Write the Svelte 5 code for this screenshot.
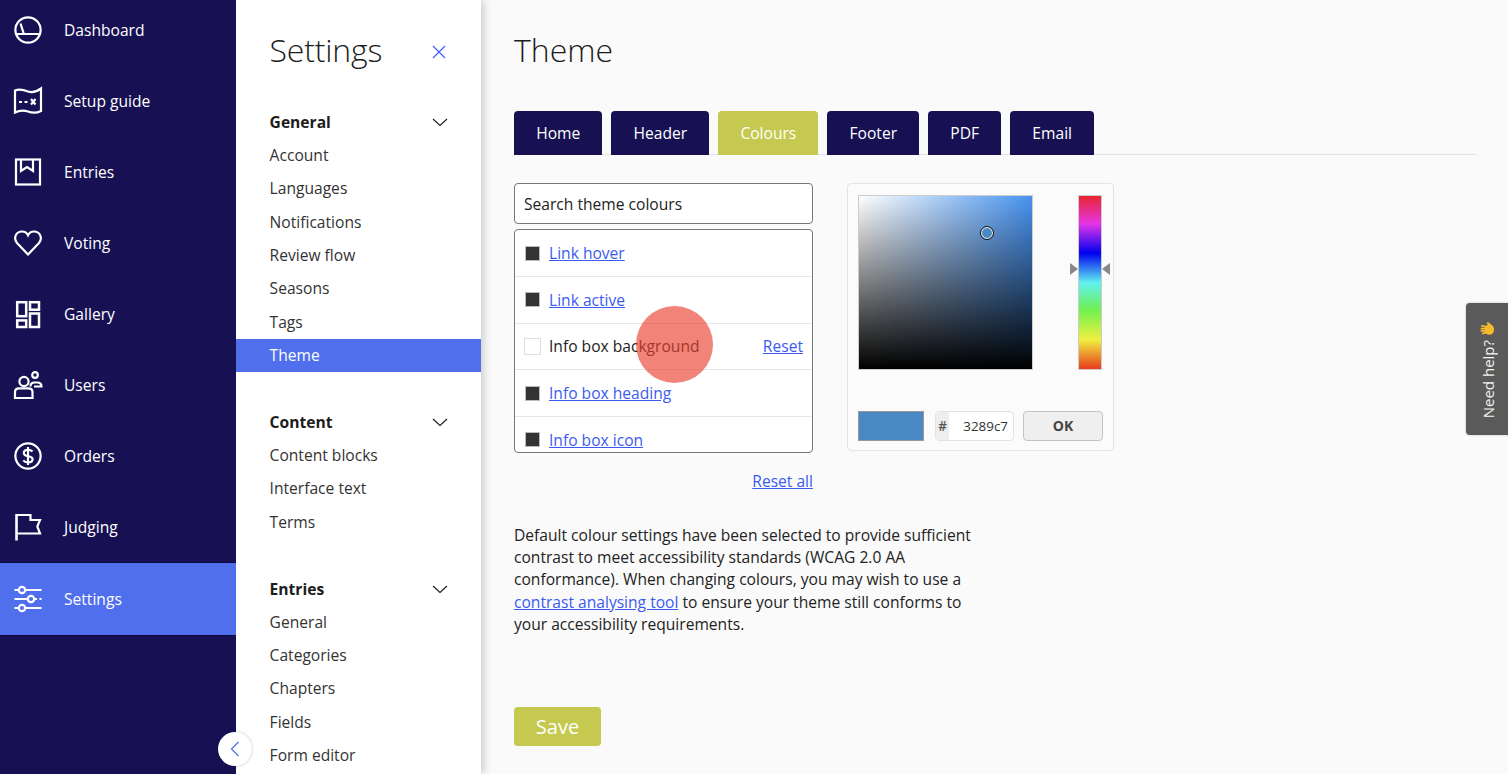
<script>
  const nav = [
    { label: 'Dashboard', icon: 'dash' },
    { label: 'Setup guide', icon: 'map' },
    { label: 'Entries', icon: 'entries' },
    { label: 'Voting', icon: 'heart' },
    { label: 'Gallery', icon: 'gallery' },
    { label: 'Users', icon: 'users' },
    { label: 'Orders', icon: 'orders' },
    { label: 'Judging', icon: 'flag' },
    { label: 'Settings', icon: 'sliders', active: true }
  ];
  const sections = [
    { title: 'General', items: ['Account', 'Languages', 'Notifications', 'Review flow', 'Seasons', 'Tags', 'Theme'] },
    { title: 'Content', items: ['Content blocks', 'Interface text', 'Terms'] },
    { title: 'Entries', items: ['General', 'Categories', 'Chapters', 'Fields', 'Form editor'] }
  ];
  const tabs = ['Home', 'Header', 'Colours', 'Footer', 'PDF', 'Email'];
  const colours = [
    { name: 'Link hover' },
    { name: 'Link active' },
    { name: 'Info box background', custom: true },
    { name: 'Info box heading' },
    { name: 'Info box icon' }
  ];
</script>

<div class="app">
  <nav class="rail">
    {#each nav as item}
      <div class="rail-item" class:on={item.active}>
        <svg class="rail-icon" viewBox="0 0 28 28" fill="none" stroke="#fff" stroke-width="2.2">
          {#if item.icon === 'dash'}
            <circle cx="14" cy="14" r="12.6" />
            <path d="M6.5 7.5 L9.8 17.8 M1.5 18 H26.5" />
          {:else if item.icon === 'map'}
            <path d="M1 3.5 C5 2 9 2.5 14 4.5 C19 6 23 4.5 27 1.5 V24 C23 26 19 26.5 14 24.5 C9 23 5 23.5 1 25.5 Z" />
            <path d="M5 15 H8 M10.5 15 H13.5 M17 12 L21.5 17.5 M21.5 12 L17 17.5" />
          {:else if item.icon === 'entries'}
            <rect x="2" y="1.5" width="24" height="25" />
            <path d="M7 1.5 V13 L13 9 L19 13 V1.5" />
          {:else if item.icon === 'heart'}
            <path d="M14 25.5 L3 14 C-1 9 2 2.5 8 2.5 C11 2.5 13 4.2 14 6.3 C15 4.2 17 2.5 20 2.5 C26 2.5 29 9 25 14 Z" />
          {:else if item.icon === 'gallery'}
            <rect x="3.2" y="2.2" width="9" height="14" stroke-width="2.5" />
            <rect x="16" y="2.2" width="9" height="7.5" stroke-width="2.5" />
            <rect x="3.2" y="20.4" width="9" height="6.6" stroke-width="2.5" />
            <rect x="16" y="13.5" width="9" height="13.5" stroke-width="2.5" />
          {:else if item.icon === 'users'}
            <circle cx="10" cy="10.5" r="4.6" />
            <path d="M1 27 V21 C1 18.5 3 17.3 5 17.3 H14.5 C16.8 17.3 18.5 18.8 18.5 21 V27 Z" />
            <circle cx="21" cy="4" r="2.8" />
            <path d="M16.5 15.5 C16.5 12.5 18.5 11.5 20.5 11.5 H23 C25.5 11.5 27.5 12.5 27.5 15.5 H20" />
          {:else if item.icon === 'orders'}
            <circle cx="14" cy="14" r="12.6" />
            <path d="M18.5 9.5 C17.5 8.3 16 7.8 14 7.8 C11.5 7.8 9.8 9.2 9.8 11 C9.8 15.8 18.6 12.8 18.6 17.2 C18.6 19.2 16.6 20.3 14 20.3 C12 20.3 10.2 19.6 9.3 18.3 M14 5 V23" />
          {:else if item.icon === 'flag'}
            <path d="M2.5 1 V27.5" stroke-width="2.6" />
            <path d="M2.5 2 H16.5 V7 H26 L23.3 13.5 L26 20.5 H2.5" />
          {:else if item.icon === 'sliders'}
            <path d="M0.5 5 H4.5 M11.5 5 H27.5 M0.5 14 H13.5 M20.5 14 H23 M25.5 14 H27.5 M0.5 23 H4.5 M11.5 23 H27.5" />
            <circle cx="8" cy="5" r="3.2" />
            <circle cx="17" cy="14" r="3.2" />
            <circle cx="8" cy="23" r="3.2" />
          {/if}
        </svg>
        <span>{item.label}</span>
      </div>
    {/each}
  </nav>

  <aside class="panel">
    <header class="panel-head">
      <h2>Settings</h2>
      <svg class="close" viewBox="0 0 14 14" fill="none" stroke="#3d5ef0" stroke-width="1.2">
        <path d="M1 1 L13 13 M13 1 L1 13" />
      </svg>
    </header>
    {#each sections as s}
      <section class="group">
        <div class="group-title">
          <b>{s.title}</b>
          <svg class="chev" viewBox="0 0 16 9" fill="none" stroke="#1a1a1a" stroke-width="1.1">
            <path d="M1 1 L8 7.5 L15 1" />
          </svg>
        </div>
        {#each s.items as it}
          <div class="link" class:on={it === 'Theme'}>{it}</div>
        {/each}
      </section>
    {/each}
  </aside>

  <main class="main">
    <h1>Theme</h1>
    <div class="tabs">
      {#each tabs as t}
        <div class="tab" class:sel={t === 'Colours'}>{t}</div>
      {/each}
    </div>

    <div class="editor">
      <div class="left">
        <div class="search">Search theme colours</div>
        <div class="list">
          {#each colours as c}
            <div class="row">
              <span class="sw" class:blank={c.custom}></span>
              {#if c.custom}
                <span class="plain">{c.name}</span>
                <a class="reset" href="#r">Reset</a>
              {:else}
                <a href="#c">{c.name}</a>
              {/if}
            </div>
          {/each}
        </div>
        <div class="reset-all"><a href="#a">Reset all</a></div>
      </div>

      <div class="picker">
        <div class="pick-top">
          <div class="sv"><span class="dot"></span></div>
          <div class="hue">
            <span class="arrow l"></span>
            <span class="arrow r"></span>
          </div>
        </div>
        <div class="pick-bottom">
          <div class="current"></div>
          <div class="hex"><span class="hash">#</span><span class="val">3289c7</span></div>
          <div class="ok">OK</div>
        </div>
      </div>
    </div>

    <p class="note">Default colour settings have been selected to provide sufficient contrast to meet accessibility standards (WCAG 2.0 AA conformance). When changing colours, you may wish to use a <a href="#t">contrast analysing tool</a> to ensure your theme still conforms to your accessibility requirements.</p>

    <div class="save">Save</div>
  </main>

  <button class="collapse" aria-label="Collapse">
    <svg viewBox="0 0 10 16" fill="none" stroke="#4f6fed" stroke-width="1.2"><path d="M8.5 1 L1.5 8 L8.5 15" /></svg>
  </button>
  <div class="touch"></div>
  <div class="help">
    <svg class="hand" viewBox="0 0 16 16">
      <g fill="#f5b92e">
        <ellipse cx="10" cy="8" rx="5" ry="5.6" />
        <rect x="1" y="3.6" width="7" height="2" rx="1" transform="rotate(12 4 4.6)" />
        <rect x="0.5" y="6" width="7" height="2" rx="1" />
        <rect x="0.5" y="8.4" width="7" height="2" rx="1" />
        <rect x="2" y="10.8" width="6" height="2" rx="1" transform="rotate(-12 5 11.8)" />
        <rect x="7" y="0.6" width="5" height="2.4" rx="1.2" transform="rotate(40 9 2)" />
      </g>
    </svg>
    <span>Need help?</span>
  </div>
</div>

<style>
  :global(body) { margin: 0; }
  .app {
    position: relative;
    display: flex;
    width: 1508px;
    height: 774px;
    overflow: hidden;
    font-family: "Open Sans", "Noto Sans", sans-serif;
    font-size: 15.6px;
    color: #1c1c1c;
    background: #fafafa;
  }
  a { color: #3b5bf0; text-decoration: underline; }

  .rail {
    flex: 0 0 236px;
    background: #171154;
    color: #fff;
    position: relative;
    z-index: 2;
  }
  .rail-item {
    display: flex;
    align-items: center;
    height: 71.1px;
    padding-left: 14px;
    gap: 22px;
    box-sizing: border-box;
    color: #fff;
  }
  .rail-item:first-child { margin-top: -5.8px; }
  .rail-item.on {
    background: #4f6fed;
    height: 71.8px;
    box-shadow: 0 -1px 0 #0f0b40, 0 1px 0 #0f0b40;
  }
  .rail-icon { width: 28px; height: 28px; flex: none; overflow: visible; }

  .panel {
    flex: 0 0 245px;
    background: #fff;
    box-shadow: 3px 0 8px rgba(0, 0, 0, 0.18);
    position: relative;
    z-index: 1;
  }
  .panel-head {
    display: flex;
    align-items: center;
    justify-content: space-between;
    height: 105.65px;
    padding: 0 35px 0 33.6px;
    box-sizing: border-box;
  }
  .panel-head h2 {
    margin: -6px 0 0;
    font-size: 32px;
    font-weight: 300;
    color: #1c1c1c;
    letter-spacing: -0.2px;
  }
  .close { width: 14px; height: 14px; margin-top: -2px; }
  .group { margin-bottom: 33.35px; }
  .group-title {
    display: flex;
    align-items: center;
    justify-content: space-between;
    height: 33.35px;
    padding: 0 33px 0 33.6px;
  }
  .group-title b { font-weight: 700; font-size: 15.6px; }
  .chev { width: 16px; height: 9px; }
  .link {
    height: 33.35px;
    line-height: 33.35px;
    padding-left: 33.6px;
    color: #333;
  }
  .link.on { background: #4f6fed; color: #fff; }

  .main {
    flex: 1;
    display: flex;
    flex-direction: column;
    padding: 0 31px 0 33px;
    min-width: 0;
  }
  h1 {
    margin: 28px 0 0;
    height: 83px;
    font-size: 32px;
    line-height: 44px;
    font-weight: 300;
    color: #1c1c1c;
  }
  .tabs {
    display: flex;
    gap: 9px;
    height: 43px;
    border-bottom: 1px solid #e2e2e2;
    flex: none;
  }
  .tab {
    height: 44px;
    box-sizing: border-box;
    padding: 0 22.15px;
    line-height: 44px;
    background: #171154;
    color: #fff;
    border-radius: 4px 4px 0 0;
  }
  .tab.sel { background: #c5c94f; }

  .editor {
    display: flex;
    gap: 34px;
    margin-top: 28px;
    align-items: flex-start;
  }
  .left { width: 299px; }
  .search {
    height: 41px;
    box-sizing: border-box;
    border: 1px solid #777;
    border-radius: 4px;
    background: #fff;
    padding-left: 9px;
    line-height: 40px;
    color: #222;
  }
  .list {
    margin-top: 5px;
    height: 224px;
    box-sizing: border-box;
    padding-top: 0.3px;
    border: 1px solid #777;
    border-radius: 4px;
    background: #fff;
    overflow: hidden;
  }
  .row {
    display: flex;
    align-items: center;
    height: 46.67px;
    box-sizing: border-box;
    padding: 0 9px 0 10px;
    border-bottom: 1px solid #e6e6e6;
  }
  .sw {
    width: 15px;
    height: 15px;
    flex: none;
    box-sizing: border-box;
    background: #333;
    border: 1px solid #bbb;
    margin-right: 9px;
  }
  .sw.blank { background: #fff; border-color: #ddd; width: 17px; height: 17px; margin-left: -1px; margin-right: 8px; }
  .plain { flex: 1; color: #222; }
  .reset-all { text-align: right; margin-top: 17px; line-height: 22px; }

  .picker {
    width: 267px;
    height: 268px;
    box-sizing: border-box;
    padding: 11px 10px;
    background: #fbfbfb;
    border: 1px solid #e4e4e4;
    border-radius: 4px;
  }
  .pick-top { display: flex; gap: 45px; }
  .sv {
    position: relative;
    width: 175px;
    height: 175px;
    box-sizing: border-box;
    border: 1px solid #ccc;
    background:
      linear-gradient(to top, #000, rgba(0, 0, 0, 0)),
      linear-gradient(to right, #fff, #4793f0);
  }
  .dot {
    position: absolute;
    left: 122px;
    top: 31px;
    width: 10px;
    height: 10px;
    border-radius: 50%;
    background: #4a88c4;
    border: 1px solid #fff;
    outline: 1px solid #111;
  }
  .hue {
    position: relative;
    width: 24px;
    height: 175px;
    box-sizing: border-box;
    border: 1px solid #ccc;
    background: linear-gradient(to bottom, #e8262e 0%, #e535e8 16%, #0000f0 33%, #60f0f0 50%, #70f050 66%, #f0f040 83%, #e83c1e 100%);
  }
  .arrow {
    position: absolute;
    top: 67px;
    width: 0;
    height: 0;
    border-top: 6px solid transparent;
    border-bottom: 6px solid transparent;
  }
  .arrow.l { left: -9px; border-left: 8px solid #888; }
  .arrow.r { right: -9px; border-right: 8px solid #888; }
  .pick-bottom { display: flex; margin-top: 41px; height: 30px; }
  .current {
    width: 66px;
    box-sizing: border-box;
    background: #4a88c4;
    border: 1px solid #999;
  }
  .hex {
    display: flex;
    width: 79px;
    margin-left: 11px;
    box-sizing: border-box;
    border: 1px solid #e2e2e2;
    border-radius: 4px;
    overflow: hidden;
    background: #fff;
    font-size: 13.4px;
    line-height: 28px;
  }
  .hash { width: 13px; background: #eee; text-align: center; color: #555; font-weight: 600; }
  .val { flex: 1; text-align: right; padding-right: 5px; color: #333; }
  .ok {
    width: 80px;
    margin-left: 9px;
    box-sizing: border-box;
    border: 1px solid #c4c4c4;
    border-radius: 4px;
    background: #efefef;
    text-align: center;
    font-size: 14px;
    font-weight: 700;
    line-height: 28px;
    color: #444;
  }

  .note {
    width: 462px;
    margin: 32px 0 0;
    font-size: 15.6px;
    line-height: 22.2px;
    color: #222;
  }
  .save {
    width: 87px;
    height: 39px;
    margin-top: 72px;
    background: #c5c94f;
    color: #fff;
    border-radius: 4px;
    text-align: center;
    font-size: 20px;
    line-height: 39px;
  }

  .collapse {
    position: absolute;
    left: 218px;
    top: 732px;
    width: 34px;
    height: 34px;
    padding: 0;
    border: 0;
    border-radius: 50%;
    background: #fff;
    box-shadow: 0 0 3px rgba(0, 0, 0, 0.25);
    z-index: 3;
    display: flex;
    align-items: center;
    justify-content: center;
  }
  .collapse svg { width: 10px; height: 16px; }
  .touch {
    position: absolute;
    left: 636px;
    top: 306px;
    width: 77px;
    height: 77px;
    border-radius: 50%;
    background: rgba(233, 64, 48, 0.65);
    z-index: 4;
  }
  .help {
    position: absolute;
    right: 0;
    top: 303px;
    width: 42px;
    height: 132px;
    box-sizing: border-box;
    padding: 19px 0 0 1px;
    background: #5a5a5a;
    border-radius: 4px 0 0 4px;
    display: flex;
    flex-direction: column;
    align-items: center;
    gap: 3px;
    color: #f2f2f2;
    box-shadow: 0 0 2px rgba(0, 0, 0, 0.3);
  }
  .hand { width: 15px; height: 15px; flex: none; }
  .help span {
    writing-mode: vertical-rl;
    transform: rotate(180deg);
    font-size: 15px;
    line-height: 20px;
    white-space: nowrap;
  }
</style>
